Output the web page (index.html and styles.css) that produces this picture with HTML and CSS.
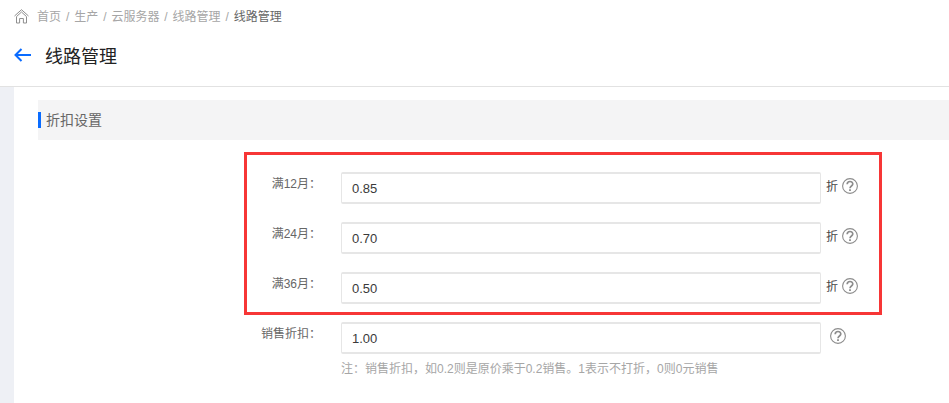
FILE: index.html
```html
<!DOCTYPE html>
<html lang="zh-CN">
<head>
<meta charset="utf-8">
<title>线路管理</title>
<link rel="stylesheet" href="styles.css">
</head>
<body>
<div class="crumbs">
  <svg class="home" width="15" height="15" viewBox="0 0 15 15" fill="none" stroke="#8f8f8f" stroke-width="1"><path d="M.5 7 7.5.7 14.5 7M2.5 7.6 7.5 3 12.5 7.6M2.5 7.6V14H5.6V9.5H9.4V14H12.5V7.6"/></svg>
  <span class="crumb">首页 / 生产 / 云服务器 / 线路管理 / </span><span class="crumb-now">线路管理</span>
</div>
<div class="head">
  <svg class="back" width="18" height="14" viewBox="0 0 18 14" fill="none" stroke="#0a6cff" stroke-width="2"><path d="M17 7H2M7.5 1 1.5 7l6 6"/></svg>
  <h1>线路管理</h1>
</div>
<div class="page">
  <div class="rail"></div>
  <div class="main">
    <div class="section"><span class="section-title">折扣设置</span></div>
    <div class="form">
      <div class="row"><label>满12月：</label><div class="field">0.85</div><span class="unit">折</span><svg class="help" viewBox="0 0 16 16"><use href="#q"/></svg></div>
      <div class="row"><label>满24月：</label><div class="field">0.70</div><span class="unit">折</span><svg class="help" viewBox="0 0 16 16"><use href="#q"/></svg></div>
      <div class="row"><label>满36月：</label><div class="field">0.50</div><span class="unit">折</span><svg class="help" viewBox="0 0 16 16"><use href="#q"/></svg></div>
      <div class="row"><label>销售折扣：</label><div class="field">1.00</div><svg class="help solo" viewBox="0 0 16 16"><use href="#q"/></svg></div>
      <p class="hint">注：销售折扣，如0.2则是原价乘于0.2销售。1表示不打折，0则0元销售</p>
    </div>
  </div>
</div>
<div class="mark"></div>
<svg class="defs" width="0" height="0"><defs><g id="q" fill="none" stroke="#8c8c8c"><circle cx="8" cy="8" r="7.4" stroke-width="1.1"/><path d="M5.2 6.2C5.2 2.6 10.8 2.6 10.8 6.1 10.8 8 8 8 8 10.2" stroke-width="1.7"/><path d="M8 11.2v1.7" stroke-width="1.8"/></g></defs></svg>
</body>
</html>
```
FILE: styles.css
```css
* { box-sizing: border-box; }
html, body { margin: 0; height: 100%; overflow: hidden; }
body {
  background: #fff;
  font-family: "Liberation Sans", "Noto Sans CJK SC", sans-serif;
  position: relative;
}
.crumbs {
  height: 33px;
  padding: 9px 0 0 14px;
  display: flex;
  align-items: flex-start;
  font-size: 12px;
  line-height: 16px;
  white-space: pre;
  word-spacing: 1.6px;
}
.home { margin-right: 8px; flex: none; }
.crumb { color: #a6a6a6; }
.crumb-now { color: #666; }
.head {
  height: 54px;
  display: flex;
  align-items: center;
  padding: 0 0 10px 14px;
  border-bottom: 1px solid #e2e2e2;
}
.back { flex: none; }
h1 {
  margin: 0 0 0 13px;
  font-size: 18px;
  font-weight: 400;
  color: #222;
}
.page { display: flex; height: 316px; }
.rail { width: 14px; flex: none; background: #eef0f5; }
.main { flex: 1; padding: 13px 0 0 24px; }
.section {
  height: 40px;
  background: #f4f4f5;
  display: flex;
  align-items: center;
}
.section-title {
  height: 16px;
  line-height: 16px;
  border-left: 3px solid #0a6cff;
  padding-left: 5px;
  font-size: 14px;
  color: #666;
}
.form { padding: 32px 0 0 0; }
.row {
  display: flex;
  height: 32px;
  margin-bottom: 18px;
  align-items: flex-start;
}
.row label {
  width: 283px;
  margin-right: 20px;
  flex: none;
  padding-top: 4px;
  text-align: right;
  font-size: 12px;
  line-height: 16px;
  color: #666;
}
.field {
  width: 480px;
  height: 32px;
  flex: none;
  border: 2px solid #e6e6e6;
  border-width: 2px 1px 2px 1px;
  border-radius: 2px;
  padding-left: 10px;
  line-height: 29px;
  font-size: 13px;
  color: #3a3a3a;
}
.unit {
  margin-left: 5px;
  padding-top: 7px;
  font-size: 12px;
  line-height: 16px;
  color: #444;
}
.help { width: 16px; height: 16px; margin: 6px 0 0 4px; flex: none; }
.help.solo { margin-left: 9px; }
.hint {
  margin: -11px 0 0 303px;
  font-size: 12px;
  line-height: 16px;
  color: #a6a6a6;
}
.mark {
  position: absolute;
  left: 244px;
  top: 152px;
  width: 638px;
  height: 163px;
  border: 3px solid #f73636;
}
.defs { position: absolute; }
```
